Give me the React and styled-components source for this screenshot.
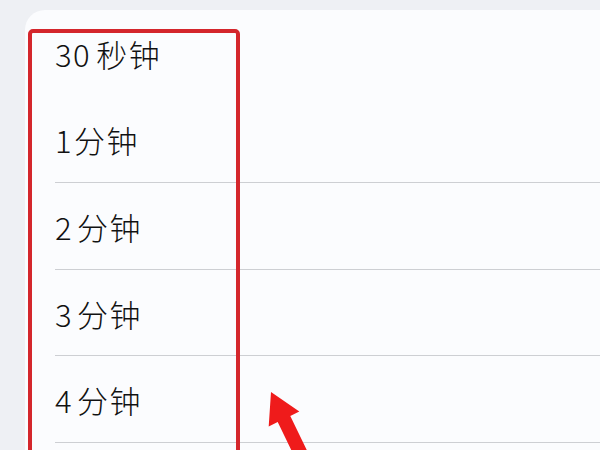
import React from 'react';
import styled, { createGlobalStyle } from 'styled-components';

const Global = createGlobalStyle`
  html, body {
    margin: 0;
    padding: 0;
    background: #eef0f4;
    overflow: hidden;
  }
`;

const Page = styled.div`
  position: relative;
  width: 600px;
  height: 450px;
  overflow: hidden;
  font-family: "Noto Sans CJK SC", "Noto Sans", sans-serif;
`;

const Card = styled.div`
  margin: 10px -20px 0 25px;
  background: #fbfcfe;
  border-top-left-radius: 20px;
  height: 480px;
`;

const Row = styled.div`
  position: relative;
  height: 86.6px;
  display: flex;
  align-items: center;
  padding-left: 30px;
  font-size: 31px;
  font-weight: 300;
  letter-spacing: 1.5px;
  color: #111;

  ${(p) =>
    p.$divider &&
    `
    &::after {
      content: '';
      position: absolute;
      left: 30px;
      right: 0;
      bottom: 0;
      height: 1px;
      background: #cdcfd3;
    }
  `}
`;

const Gap = styled.span`
  display: inline-block;
  width: ${(p) => p.$w}px;
`;

const Highlight = styled.div`
  position: absolute;
  left: 28px;
  top: 29px;
  width: 204px;
  height: 460px;
  border: 4px solid #d4262c;
  border-radius: 5px;
  pointer-events: none;
`;

const Arrow = styled.svg`
  position: absolute;
  left: 255px;
  top: 385px;
  width: 70px;
  height: 70px;
  overflow: visible;
`;

const options = [
  { n: '30', u: '秒钟', gap: 5 },
  { n: '1', u: '分钟', gap: 1 },
  { n: '2', u: '分钟', gap: 4 },
  { n: '3', u: '分钟', gap: 4 },
  { n: '4', u: '分钟', gap: 4 },
];

export default function App() {
  return (
    <Page>
      <Global />
      <Card>
        {options.map((o, i) => (
          <Row key={o.n} $divider={i > 0}>
            {o.n}
            <Gap $w={o.gap} />
            {o.u}
          </Row>
        ))}
      </Card>
      <Highlight />
      <Arrow viewBox="255 385 70 70">
        <polygon
          points="271,392 299.3,411.6 290.3,416 309.9,456.5 297.3,462.5 277.7,422 268.7,426.4"
          fill="#ef1b1b"
        />
      </Arrow>
    </Page>
  );
}
